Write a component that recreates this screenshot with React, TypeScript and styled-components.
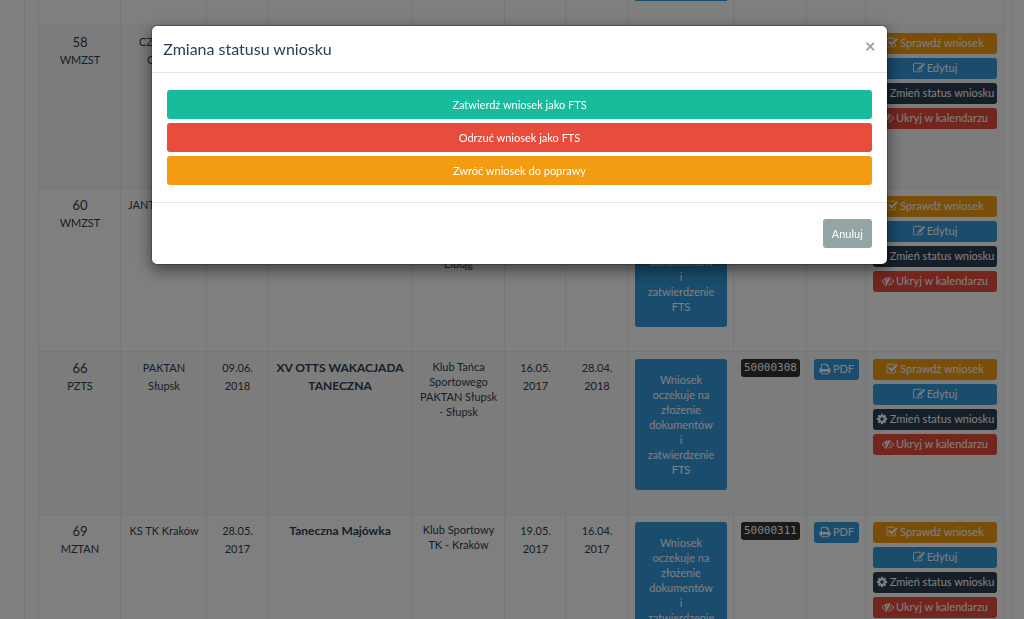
import React from "react";
import styled, { createGlobalStyle } from "styled-components";

const GlobalStyle = createGlobalStyle`
  *, *::before, *::after { box-sizing: border-box; }
  body {
    margin: 0;
    background: #fff;
    color: #2c3e50;
    font-family: Lato, "Noto Sans", sans-serif;
    font-size: 11px;
    line-height: 18px;
    overflow: hidden;
  }
`;

const colors = {
  success: "#18bc9c",
  danger: "#e74c3c",
  warning: "#f39c12",
  info: "#3498db",
  primary: "#2c3e50",
  muted: "#95a5a6",
};

type Tone = keyof typeof colors;

const Page = styled.main`
  height: 100vh;
  overflow: hidden;
  padding: 0 11px 0 24px;
`;

const Panel = styled.section`
  min-height: 100%;
  padding: 0 8px 0 13px;
  border: solid #ecf0f1;
  border-width: 0 1px;
`;

const Table = styled.table`
  width: 100%;
  table-layout: fixed;
  border-collapse: collapse;
  text-align: center;
`;

const Col = styled.col<{ $width?: number }>`
  width: ${(p) => (p.$width ? `${p.$width}px` : "auto")};
`;

const Row = styled.tr<{ $striped?: boolean }>`
  height: 163px;
  background: ${(p) => (p.$striped ? "#f9f9f9" : "#fff")};
`;

const TailRow = styled.tr`
  height: 25px;
`;

const Cell = styled.td<{ $small?: boolean }>`
  padding: 7px 6px 7px 7px;
  border: 1px solid #ecf0f1;
  vertical-align: top;
  line-height: ${(p) => (p.$small ? 15 : 18)}px;
`;

const TailCell = styled.td`
  padding: 0 6px 0 7px;
  border: solid #ecf0f1;
  border-width: 0 1px 1px;
  vertical-align: top;
`;

const StatusTail = styled.div`
  height: 1px;
  background: ${colors.info};
`;

const RowNumber = styled.div`
  font-size: 13px;
`;

const EventName = styled.strong`
  display: block;
  font-size: 12px;
  font-weight: 700;
`;

const Button = styled.button<{ $tone: Tone }>`
  display: flex;
  align-items: center;
  justify-content: center;
  gap: 2px;
  border: 0;
  border-radius: 3px;
  background: ${(p) => colors[p.$tone]};
  color: #fff;
  font: inherit;
  white-space: nowrap;
  cursor: pointer;
`;

const SmallButton = styled(Button)`
  width: 100%;
  height: 21px;
  padding: 0 2px;
`;

const StatusButton = styled(Button)`
  width: 100%;
  padding: 13px 12px;
  line-height: 15px;
  white-space: normal;
`;

const Actions = styled.div`
  display: flex;
  flex-direction: column;
  gap: 4px;
`;

const Code = styled.code`
  display: block;
  height: 18px;
  border-radius: 3px;
  background: #333;
  color: #fff;
  font-family: "DejaVu Sans Mono", monospace;
  font-size: 11px;
  line-height: 18px;
`;

const Glyph = styled.svg`
  width: 12px;
  height: 12px;
  flex: none;
  fill: currentColor;
`;

const Backdrop = styled.div`
  position: fixed;
  inset: 0;
  padding: 25px 0 0 15px;
  background: rgba(0, 0, 0, 0.5);
`;

const Modal = styled.div`
  width: 73%;
  margin: 0 auto;
  border: 1px solid rgba(0, 0, 0, 0.2);
  border-radius: 6px;
  background: #fff;
  background-clip: padding-box;
  box-shadow: 0 5px 15px rgba(0, 0, 0, 0.5);
`;

const ModalHeader = styled.header`
  display: flex;
  align-items: center;
  justify-content: space-between;
  height: 47px;
  padding: 0 11px;
  border-bottom: 1px solid #e5e5e5;
`;

const ModalTitle = styled.h4`
  margin: 0;
  font-size: 16px;
  font-weight: 400;
`;

const CloseButton = styled.button`
  padding: 0 0 8px;
  border: 0;
  background: none;
  color: #a0a0a0;
  font: 700 19px/19px Lato, sans-serif;
  cursor: pointer;
`;

const ModalBody = styled.div`
  display: flex;
  flex-direction: column;
  gap: 4px;
  padding: 17px 15px;
`;

const ModalButton = styled(Button)`
  height: 29px;
  padding: 0 9px;
`;

const ModalFooter = styled.footer`
  display: flex;
  justify-content: flex-end;
  padding: 16px 15px;
  border-top: 1px solid #e5e5e5;
`;

const icons = {
  check:
    "M1472 930v318q0 119-84.5 203.5t-203.5 84.5h-832q-119 0-203.5-84.5t-84.5-203.5v-832q0-119 84.5-203.5t203.5-84.5h832q63 0 117 25 15 7 18 23 3 17-9 29l-49 49q-10 10-23 10-3 0-9-2-23-6-45-6h-832q-66 0-113 47t-47 113v832q0 66 47 113t113 47h832q66 0 113-47t47-113v-254q0-13 9-22l64-64q10-10 23-10 6 0 12 3 20 8 20 29zm231-489l-814 814q-24 24-57 24t-57-24l-430-430q-24-24-24-57t24-57l110-110q24-24 57-24t57 24l263 263 647-647q24-24 57-24t57 24l110 110q24 24 24 57t-24 57z",
  edit:
    "M888 1184l116-116-152-152-116 116v56h96v96h56zm440-720q-16-16-33 1l-350 350q-17 17-1 33t33-1l350-350q17-17 1-33zm80 594v190q0 119-84.5 203.5t-203.5 84.5h-832q-119 0-203.5-84.5t-84.5-203.5v-832q0-119 84.5-203.5t203.5-84.5h832q63 0 117 25 15 7 18 23 3 17-10 29l-49 49q-14 14-32 8-23-6-45-6h-832q-66 0-113 47t-47 113v832q0 66 47 113t113 47h832q66 0 113-47t47-113v-126q0-13 9-22l64-64q15-15 35-7t20 29zm-96-738l288 288-672 672h-288v-288zm444 132l-92 92-288-288 92-92q28-28 68-28t68 28l152 152q28 28 28 68t-28 68z",
  cog:
    "M1152 896q0-106-75-181t-181-75-181 75-75 181 75 181 181 75 181-75 75-181zm512-109v222q0 12-8 23t-20 13l-185 28q-19 54-39 91 35 50 107 138 10 12 10 25t-9 23q-27 37-99 108t-94 71q-12 0-26-9l-138-108q-44 23-91 38-16 136-29 186-7 28-36 28h-222q-14 0-24.5-8.5t-11.5-21.5l-28-184q-49-16-90-37l-141 107q-10 9-25 9-14 0-25-11-126-114-165-168-7-10-7-23 0-12 8-23 15-21 51-66.5t54-70.5q-27-50-41-99l-183-27q-13-2-21-12.5t-8-23.5v-222q0-12 8-23t19-13l186-28q14-46 39-92-40-57-107-138-10-12-10-24 0-10 9-23 26-36 98.5-107.5t94.5-71.5q13 0 26 10l138 107q44-23 91-38 16-136 29-186 7-28 36-28h222q14 0 24.5 8.5t11.5 21.5l28 184q49 16 90 37l142-107q9-9 24-9 13 0 25 10 129 119 165 170 7 8 7 22 0 12-8 23-15 21-51 66.5t-54 70.5q26 50 41 98l183 28q13 2 21 12.5t8 23.5z",
  hide:
    "M555 1335l78-141q-87-63-136-159t-49-203q0-121 61-225-229 117-381 353 167 258 427 375zm389-759q0-20-14-34t-34-14q-125 0-214.5 89.5t-89.5 214.5q0 20 14 34t34 14 34-14 14-34q0-86 61-147t147-61q20 0 34-14t14-34zm363-191q0 7-1 9-106 189-316 567t-315 566l-49 89q-10 16-28 16-12 0-134-70-16-10-16-28 0-12 44-87-143-65-263.5-173t-208.5-245q-20-31-20-69t20-69q153-235 380-371t496-136q89 0 180 17l54-97q10-16 28-16 5 0 18 6t31 15.5 33 18.5 31.5 18.5 19.5 11.5q16 10 16 27zm37 447q0 139-79 253.5t-209 164.5l280-502q8 45 8 84zm448 128q0 35-20 69-39 64-109 145-150 172-347.5 267t-419.5 95l74-132q212-18 392.5-137t301.5-307q-115-179-282-294l63-112q95 64 182.5 153t144.5 184q20 34 20 69z",
  print:
    "M448 1536h896v-256h-896v256zm0-640h896v-384h-160q-40 0-68-28t-28-68v-160h-640v640zm1152 64q0-26-19-45t-45-19-45 19-19 45 19 45 45 19 45-19 19-45zm128 0v416q0 13-9.5 22.5t-22.5 9.5h-224v160q0 40-28 68t-68 28h-960q-40 0-68-28t-28-68v-160h-224q-13 0-22.5-9.5t-9.5-22.5v-416q0-79 56.5-135.5t135.5-56.5h64v-544q0-40 28-68t68-28h672q40 0 88 20t76 48l152 152q28 28 48 76t20 88v256h64q79 0 135.5 56.5t56.5 135.5z",
};

const Icon = ({ name }: { name: keyof typeof icons }) => (
  <Glyph viewBox="0 0 1792 1792" aria-hidden="true">
    <path d={icons[name]} />
  </Glyph>
);

interface Entry {
  id: number;
  federation: string;
  organizer: string;
  date?: string;
  name?: string;
  club?: string;
  created?: string;
  deadline?: string;
  code?: string;
}

const entries: Entry[] = [
  { id: 58, federation: "WMZST", organizer: "CZARDAS Gdynia" },
  {
    id: 60,
    federation: "WMZST",
    organizer: "JANTAR\u00a0Elbląg",
    club: "Klub Tańca Sportowego JANTAR przy MDK Elbląg - Elbląg",
  },
  {
    id: 66,
    federation: "PZTS",
    organizer: "PAKTAN Słupsk",
    date: "09.06. 2018",
    name: "XV OTTS WAKACJADA TANECZNA",
    club: "Klub Tańca Sportowego PAKTAN Słupsk -\u00a0Słupsk",
    created: "16.05. 2017",
    deadline: "28.04. 2018",
    code: "50000308",
  },
  {
    id: 69,
    federation: "MZTAN",
    organizer: "KS TK Kraków",
    date: "28.05. 2017",
    name: "Taneczna Majówka",
    club: "Klub Sportowy TK - Kraków",
    created: "19.05. 2017",
    deadline: "16.04. 2017",
    code: "50000311",
  },
];

const columns = [82, 86, 61, 0, 93, 61, 62, 106, 73, 59, 138];

const actions: { icon: keyof typeof icons; label: string; tone: Tone }[] = [
  { icon: "check", label: "Sprawdź wniosek", tone: "warning" },
  { icon: "edit", label: "Edytuj", tone: "info" },
  { icon: "cog", label: "Zmień status wniosku", tone: "primary" },
  { icon: "hide", label: "Ukryj w kalendarzu", tone: "danger" },
];

const EntryRow = ({ entry, striped }: { entry: Entry; striped: boolean }) => (
  <Row $striped={striped}>
    <Cell>
      <RowNumber>{entry.id}</RowNumber>
      {entry.federation}
    </Cell>
    <Cell>{entry.organizer}</Cell>
    <Cell>{entry.date}</Cell>
    <Cell>
      <EventName>{entry.name}</EventName>
    </Cell>
    <Cell $small>{entry.club}</Cell>
    <Cell>{entry.created}</Cell>
    <Cell>{entry.deadline}</Cell>
    <Cell>
      <StatusButton $tone="info">
        Wniosek oczekuje na złożenie dokumentów i zatwierdzenie FTS
      </StatusButton>
    </Cell>
    <Cell>{entry.code && <Code>{entry.code}</Code>}</Cell>
    <Cell>
      {entry.code && (
        <SmallButton $tone="info">
          <Icon name="print" />
          PDF
        </SmallButton>
      )}
    </Cell>
    <Cell>
      <Actions>
        {actions.map((a) => (
          <SmallButton key={a.label} $tone={a.tone}>
            <Icon name={a.icon} />
            {a.label}
          </SmallButton>
        ))}
      </Actions>
    </Cell>
  </Row>
);

export default function App() {
  return (
    <>
      <GlobalStyle />
      <Page>
        <Panel>
          <Table>
            <colgroup>
              {columns.map((width, i) => (
                <Col key={i} $width={width} />
              ))}
            </colgroup>
            <tbody>
              <TailRow>
                {columns.map((_, i) => (
                  <TailCell key={i}>{i === 7 && <StatusTail />}</TailCell>
                ))}
              </TailRow>
              {entries.map((entry, i) => (
                <EntryRow key={entry.id} entry={entry} striped={i % 2 === 0} />
              ))}
            </tbody>
          </Table>
        </Panel>
      </Page>
      <Backdrop>
        <Modal role="dialog" aria-modal="true" aria-labelledby="status-title">
          <ModalHeader>
            <ModalTitle id="status-title">Zmiana statusu wniosku</ModalTitle>
            <CloseButton aria-label="Zamknij">×</CloseButton>
          </ModalHeader>
          <ModalBody>
            <ModalButton $tone="success">Zatwierdź wniosek jako FTS</ModalButton>
            <ModalButton $tone="danger">Odrzuć wniosek jako FTS</ModalButton>
            <ModalButton $tone="warning">Zwróć wniosek do poprawy</ModalButton>
          </ModalBody>
          <ModalFooter>
            <ModalButton $tone="muted">Anuluj</ModalButton>
          </ModalFooter>
        </Modal>
      </Backdrop>
    </>
  );
}
